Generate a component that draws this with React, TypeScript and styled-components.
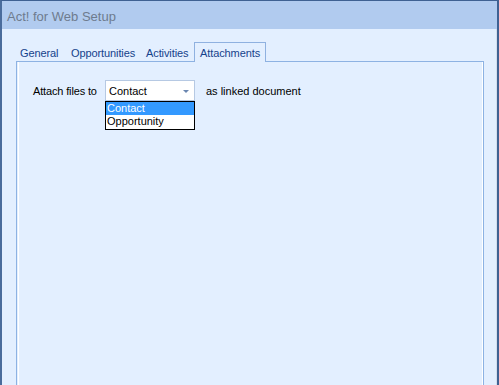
import React from "react";
import styled, { createGlobalStyle } from "styled-components";

const Global = createGlobalStyle`
  html, body { margin: 0; padding: 0; overflow: hidden; }
  body { font-family: "Liberation Sans", Arial, sans-serif; }
`;

const Window = styled.div`
  box-sizing: border-box;
  width: 499px;
  height: 385px;
  display: flex;
  flex-direction: column;
  border-top: 1px solid #3f6192;
  border-left: 2px solid #4a6c9c;
  border-right: 2px solid #3f6192;
  background: #e3efff;
`;

const TitleBar = styled.div`
  height: 28px;
  flex: none;
  background: #b1cbef;
  display: flex;
  align-items: center;
  padding: 3px 0 0 5px;
  box-sizing: border-box;
  font-size: 13px;
  color: #6e7b8e;
`;

const Body = styled.div`
  flex: 1;
  display: flex;
  flex-direction: column;
  padding: 13px 12px 0 14px;
  border-right: 1px solid #d3deec;
  min-height: 0;
`;

const TabStrip = styled.div`
  display: flex;
  align-items: flex-end;
  height: 19px;
  position: relative;
  z-index: 1;
`;

const Tab = styled.div<{ $active?: boolean; $w: number }>`
  box-sizing: border-box;
  width: ${(p) => p.$w}px;
  font-size: 11px;
  color: #15428b;
  display: flex;
  align-items: center;
  padding-left: ${(p) => (p.$active ? 5 : 3)}px;
  height: ${(p) => (p.$active ? 20 : 17)}px;
  margin-bottom: ${(p) => (p.$active ? -1 : 0)}px;
  background: ${(p) => (p.$active ? "#e3efff" : "transparent")};
  border: ${(p) => (p.$active ? "1px solid #8fb1e0" : "1px solid transparent")};
  border-bottom: none;
  white-space: nowrap;
  letter-spacing: -0.1px;
`;

const Panel = styled.div`
  flex: 1;
  border: 1px solid #8db2e3;
  border-bottom: none;
  box-shadow: inset 1px 0 0 #e3efff, inset 2px 0 0 #ffffff, inset -1px 0 0 #ffffff;
  padding: 18px 16px 0 16px;
`;

const Row = styled.div`
  display: flex;
  align-items: center;
  font-size: 11px;
  color: #000;
`;

const Label = styled.div`
  width: 72px;
  letter-spacing: -0.15px;
`;

const Combo = styled.div`
  position: relative;
  box-sizing: border-box;
  width: 90px;
  height: 21px;
  background: #fff;
  border: 1px solid #b6c9e3;
  display: flex;
  align-items: center;
  justify-content: space-between;
  padding: 0 5px 0 3px;
`;

const Arrow = styled.span`
  width: 0;
  height: 0;
  border-left: 3px solid transparent;
  border-right: 3px solid transparent;
  border-top: 3px solid #6a86b0;
  margin-top: 1px;
`;

const List = styled.div`
  position: absolute;
  top: 20px;
  left: -1px;
  width: 90px;
  box-sizing: border-box;
  border: 1px solid #000;
  background: #fff;
  padding-bottom: 1px;
`;

const Item = styled.div<{ $selected?: boolean }>`
  height: 13px;
  line-height: 13px;
  padding-left: 1px;
  font-size: 11px;
  background: ${(p) => (p.$selected ? "#3399ff" : "#fff")};
  color: ${(p) => (p.$selected ? "#fff" : "#000")};
`;

const After = styled.div`
  margin-left: 11px;
`;

export default function App() {
  return (
    <>
      <Global />
      <Window>
        <TitleBar>Act! for Web Setup</TitleBar>
        <Body>
          <TabStrip>
            <Tab $w={51}>General</Tab>
            <Tab $w={75}>Opportunities</Tab>
            <Tab $w={52}>Activities</Tab>
            <Tab $w={72} $active>
              Attachments
            </Tab>
          </TabStrip>
          <Panel>
            <Row>
              <Label>Attach files to</Label>
              <Combo>
                <span>Contact</span>
                <Arrow />
                <List>
                  <Item $selected>Contact</Item>
                  <Item>Opportunity</Item>
                </List>
              </Combo>
              <After>as linked document</After>
            </Row>
          </Panel>
        </Body>
      </Window>
    </>
  );
}
